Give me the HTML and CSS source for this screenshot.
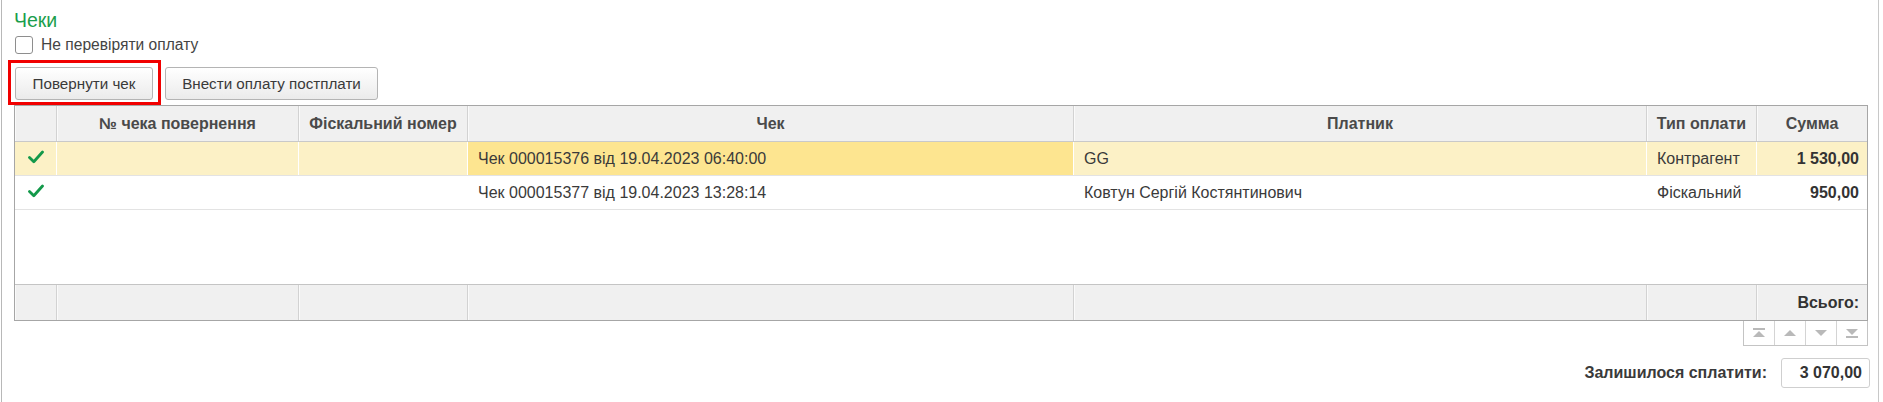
FILE: index.html
```html
<!DOCTYPE html>
<html lang="uk">
<head>
<meta charset="utf-8">
<title>Чеки</title>
<link rel="stylesheet" href="styles.css">
</head>
<body>
<div class="window">
  <div class="title">Чеки</div>
  <label class="check-line"><span class="checkbox"></span><span>Не перевіряти оплату</span></label>
  <div class="toolbar">
    <div class="highlight"><button class="btn btn-return">Повернути чек</button></div>
    <button class="btn btn-post">Внести оплату постплати</button>
  </div>
  <div class="table">
    <div class="row head">
      <div class="cell"></div>
      <div class="cell c">№ чека повернення</div>
      <div class="cell c">Фіскальний номер</div>
      <div class="cell c">Чек</div>
      <div class="cell c">Платник</div>
      <div class="cell c">Тип оплати</div>
      <div class="cell c last">Сумма</div>
    </div>
    <div class="row data current">
      <div class="cell mark"><svg width="16" height="14" viewBox="0 0 16 14"><path d="M1.5 7.5 L5.8 11.8 L14.5 2" fill="none" stroke="#13994a" stroke-width="2.8" stroke-linecap="round" stroke-linejoin="round"/></svg></div>
      <div class="cell"></div>
      <div class="cell"></div>
      <div class="cell sel">Чек 000015376 від 19.04.2023 06:40:00</div>
      <div class="cell">GG</div>
      <div class="cell">Контрагент</div>
      <div class="cell r b last">1 530,00</div>
    </div>
    <div class="row data">
      <div class="cell mark"><svg width="16" height="14" viewBox="0 0 16 14"><path d="M1.5 7.5 L5.8 11.8 L14.5 2" fill="none" stroke="#13994a" stroke-width="2.8" stroke-linecap="round" stroke-linejoin="round"/></svg></div>
      <div class="cell"></div>
      <div class="cell"></div>
      <div class="cell">Чек 000015377 від 19.04.2023 13:28:14</div>
      <div class="cell">Ковтун Сергій Костянтинович</div>
      <div class="cell">Фіскальний</div>
      <div class="cell r b last">950,00</div>
    </div>
    <div class="empty"></div>
    <div class="row foot">
      <div class="cell"></div>
      <div class="cell"></div>
      <div class="cell"></div>
      <div class="cell"></div>
      <div class="cell"></div>
      <div class="cell"></div>
      <div class="cell r b last">Всього:</div>
    </div>
  </div>
  <div class="nav-line">
    <div class="nav">
      <span class="nav-btn"><svg width="12" height="10" viewBox="0 0 12 10"><rect x="0" y="0" width="12" height="2" fill="#b9b9b9"/><path d="M0 9 L6 3 L12 9 Z" fill="#b9b9b9"/></svg></span>
      <span class="nav-btn"><svg width="12" height="8" viewBox="0 0 12 8"><path d="M0 7 L6 1 L12 7 Z" fill="#b9b9b9"/></svg></span>
      <span class="nav-btn"><svg width="12" height="8" viewBox="0 0 12 8"><path d="M0 1 L6 7 L12 1 Z" fill="#b9b9b9"/></svg></span>
      <span class="nav-btn"><svg width="12" height="10" viewBox="0 0 12 10"><path d="M0 1 L6 7 L12 1 Z" fill="#b9b9b9"/><rect x="0" y="8" width="12" height="2" fill="#b9b9b9"/></svg></span>
    </div>
  </div>
  <div class="total-line">
    <span class="total-label">Залишилося сплатити:</span>
    <span class="total-box">3 070,00</span>
  </div>
</div>
</body>
</html>
```

FILE: styles.css
```css
html, body {
  margin: 0;
  padding: 0;
  background: #fff;
}
body {
  font-family: "Liberation Sans", Arial, sans-serif;
  color: #404040;
  font-size: 16px;
}
.window {
  margin-left: 1px;
  width: 1878px;
  height: 402px;
  border-left: 1px solid #b8b8b8;
  border-right: 1px solid #c8c8c8;
  padding: 0 10px 0 12px;
  box-sizing: border-box;
}
.title {
  color: #1a9e4c;
  font-size: 19.5px;
  line-height: 22px;
  padding-top: 9px;
  height: 22px;
}
.check-line {
  display: flex;
  align-items: center;
  gap: 8px;
  height: 18px;
  margin-top: 5px;
  padding-left: 1px;
  color: #444;
  font-size: 15.6px;
}
.checkbox {
  width: 16px;
  height: 16px;
  border: 1px solid #8e8e8e;
  border-radius: 3px;
  background: #fff;
}
.toolbar {
  display: flex;
  align-items: flex-start;
  gap: 4px;
  margin-top: 6px;
  height: 45px;
  margin-left: -6px;
}
.highlight {
  border: 3px solid #f10000;
  padding: 4px 5px 2px 4px;
  height: 45px;
  box-sizing: border-box;
  display: flex;
  align-items: flex-start;
}
.btn {
  font-family: "Liberation Sans", Arial, sans-serif;
  font-size: 15.2px;
  color: #3a3a3a;
  height: 33px;
  padding: 0;
  border: 1px solid #b4b4b4;
  border-radius: 3px;
  background: linear-gradient(#ffffff, #ebebeb);
  text-align: center;
}
.btn-return { width: 138px; }
.btn-post { width: 213px; margin-top: 7px; }
.table {
  width: 1854px;
  height: 216px;
  box-sizing: border-box;
  border: 1px solid #a6a6a6;
  display: flex;
  flex-direction: column;
}
.row {
  display: grid;
  grid-template-columns: 42px 242px 169px 606px 573px 110px 1fr;
  box-sizing: border-box;
}
.cell {
  display: flex;
  align-items: center;
  padding: 0 10px;
  white-space: nowrap;
  overflow: hidden;
  box-sizing: border-box;
}
.cell.c { justify-content: center; }
.cell.r { justify-content: flex-end; padding-right: 8px; }
.cell.b { font-weight: bold; color: #333; }
.head {
  height: 36px;
  background: #f0f0f0;
  border-bottom: 1px solid #c9c9c9;
  font-weight: bold;
  color: #4a4a4a;
}
.head .cell, .foot .cell {
  border-right: 1px solid #d2d2d2;
  box-shadow: inset 1px 0 0 #fafafa;
}
.head .cell.last, .foot .cell.last { border-right: none; }
.data {
  height: 34px;
  border-bottom: 1px solid #e3e3e3;
  color: #3a3a3a;
}
.data.current { background: #fcf1c6; }
.data.current .cell { border-right: 1px solid #fff; }
.data.current .cell.last { border-right: none; }
.data .cell.sel { background: #fde590; }
.cell.mark { justify-content: center; padding: 0 0 3px 0; }
.empty { flex: 1; }
.foot {
  height: 36px;
  background: #f0f0f0;
  border-top: 1px solid #c4c4c4;
}
.nav-line {
  display: flex;
  justify-content: flex-end;
  align-items: flex-start;
  width: 1854px;
  height: 37px;
}
.nav {
  display: flex;
  height: 25px;
  border: 1px solid #c4c4c4;
  border-top: none;
  box-sizing: border-box;
}
.nav-btn {
  width: 30px;
  display: flex;
  align-items: center;
  justify-content: center;
  border-left: 1px solid #d4d4d4;
}
.nav-btn:first-child { border-left: none; }
.total-line {
  display: flex;
  justify-content: flex-end;
  align-items: center;
  gap: 14px;
  width: 1856px;
  height: 30px;
}
.total-label {
  font-weight: bold;
  color: #3a3a3a;
}
.total-box {
  width: 89px;
  height: 30px;
  box-sizing: border-box;
  border: 1px solid #cfcfcf;
  border-radius: 3px;
  display: flex;
  align-items: center;
  justify-content: flex-end;
  padding-right: 7px;
  font-weight: bold;
  color: #333;
}
```
